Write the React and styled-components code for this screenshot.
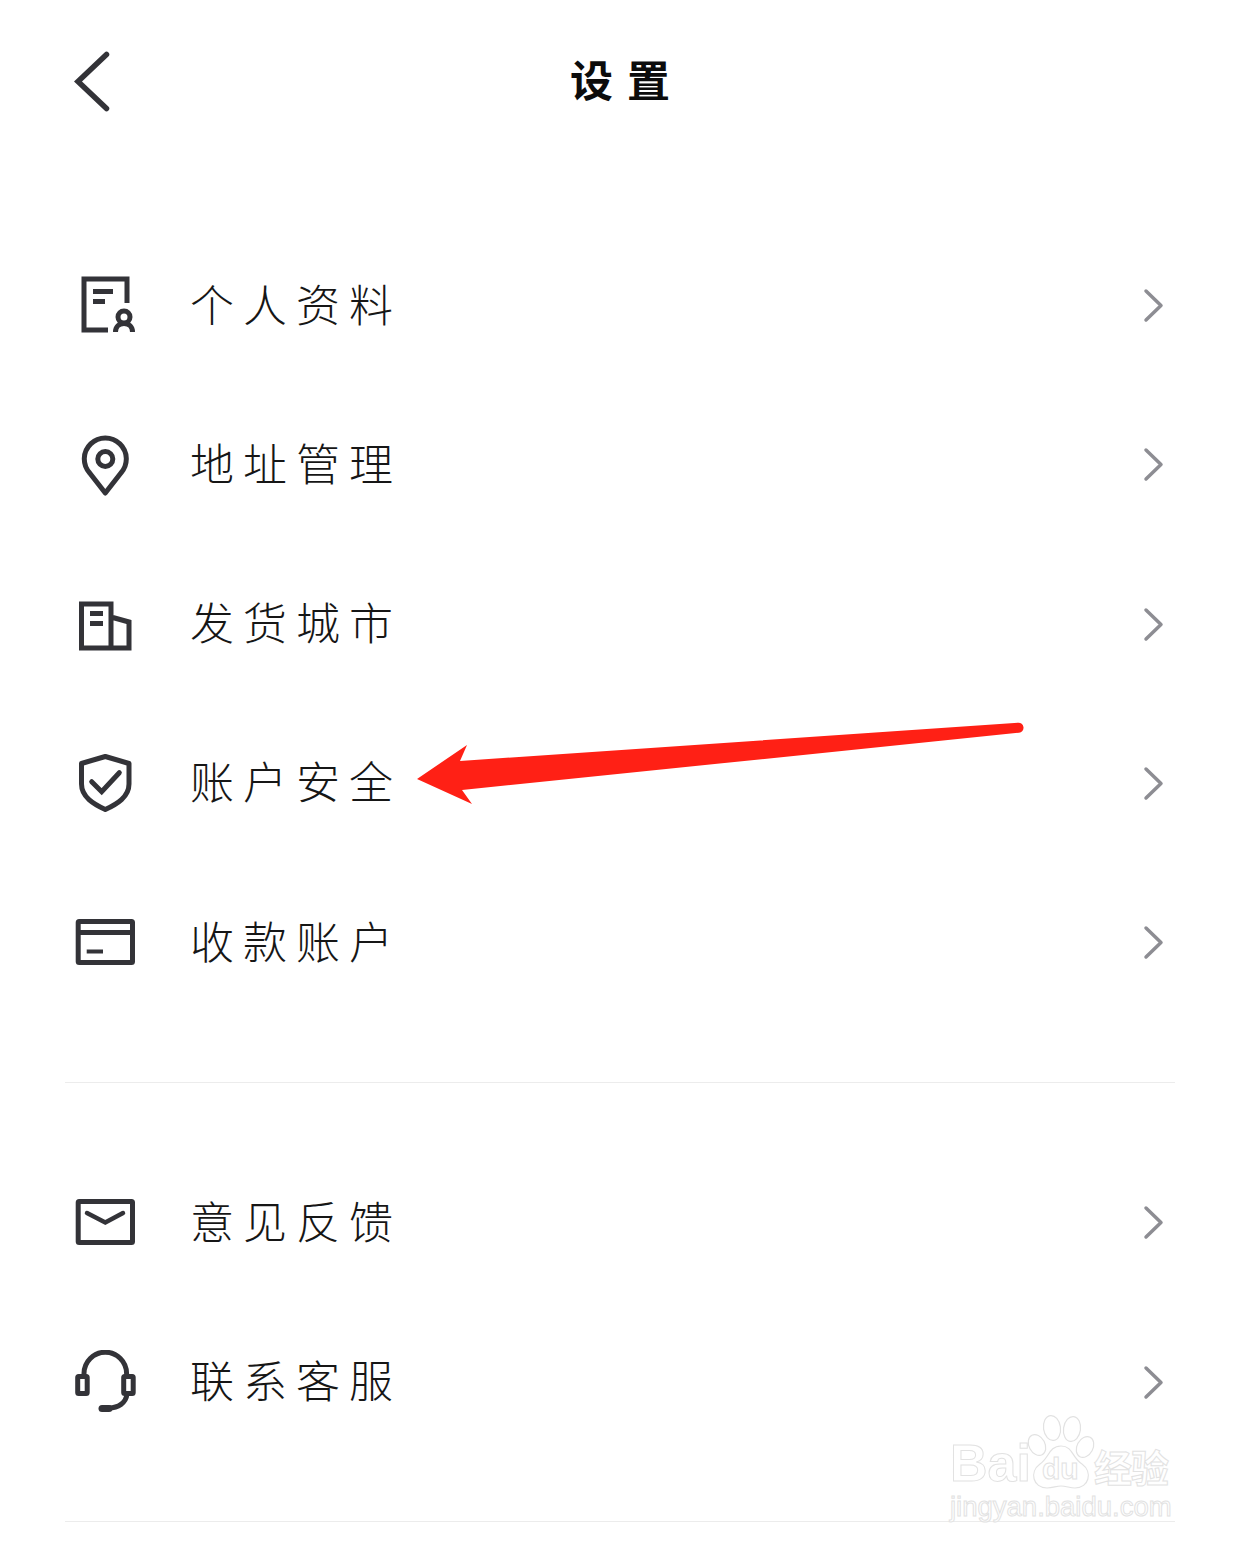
import React from 'react';
import styled, { createGlobalStyle } from 'styled-components';

const GlobalStyle = createGlobalStyle`
  html, body {
    margin: 0;
    padding: 0;
    background: #fff;
  }
  body {
    font-family: "Noto Sans CJK SC", "Liberation Sans", sans-serif;
  }
`;

const Page = styled.div`
  position: relative;
  width: 1240px;
  height: 1548px;
  overflow: hidden;
  background: #fff;
`;

const Header = styled.header`
  display: grid;
  grid-template-columns: 1fr auto 1fr;
  align-items: center;
  height: 160px;
  padding: 0 73px;
`;

const BackButton = styled.button`
  display: flex;
  justify-self: start;
  width: 40px;
  height: 64px;
  padding: 0;
  border: 0;
  background: none;
`;

const Title = styled.h1`
  margin: 0 -14px 4px 0;
  font-size: 43px;
  font-weight: 700;
  line-height: 60px;
  letter-spacing: 14px;
  color: #0c0c0c;
`;

const Menu = styled.ul`
  margin: ${(p) => p.$top}px 0 0;
  padding: 0;
  list-style: none;
`;

const Row = styled.li`
  display: flex;
  align-items: center;
  height: 159.25px;
  padding: 0 75px 0 73px;
`;

const IconBox = styled.svg`
  flex: none;
  width: 64px;
  height: 64px;
  fill: none;
  stroke: #333338;
  stroke-width: 5;
`;

const Label = styled.span`
  flex: 1;
  margin: 0 0 5px 53px;
  font-size: 44px;
  font-weight: 300;
  line-height: 60px;
  letter-spacing: 9px;
  color: #161616;
`;

const Chevron = styled.svg`
  flex: none;
  width: 22px;
  height: 36px;
  fill: none;
  stroke: #8d8d93;
  stroke-width: 3.5;
`;

const Divider = styled.hr`
  height: 1px;
  margin: 60px 65px;
  border: 0;
  background: #ececec;
`;

const Arrow = styled.svg`
  position: absolute;
  left: 410px;
  top: 715px;
  width: 620px;
  height: 95px;
`;

const Watermark = styled.div`
  position: absolute;
  left: 950px;
  top: 1414px;
  width: 226px;
  height: 108px;
  font-family: "Liberation Sans", sans-serif;
  color: #fff;
  -webkit-text-stroke: 1px #e2e2e2;
`;

const Brand = styled.div`
  display: flex;
  align-items: flex-end;
  height: 78px;
`;

const Bai = styled.span`
  font-size: 52px;
  font-weight: 700;
  line-height: 58px;
  letter-spacing: 0;
`;

const Paw = styled.svg`
  flex: none;
  width: 70px;
  height: 78px;
  margin-left: -6px;
  fill: #fff;
  stroke: #e2e2e2;
  stroke-width: 1.2;

  text {
    font-family: "Liberation Sans", sans-serif;
    font-size: 30px;
    font-weight: 700;
    stroke-width: 1;
  }
`;

const Jingyan = styled.span`
  font-family: "Noto Sans CJK SC", sans-serif;
  font-size: 38px;
  font-weight: 700;
  line-height: 52px;
  letter-spacing: -1px;
  margin-left: -1px;
`;

const Domain = styled.div`
  font-size: 27.5px;
  line-height: 30px;
  white-space: nowrap;
`;

const ProfileIcon = () => (
  <IconBox viewBox="0 0 64 64">
    <path d="M54 30V6H11V57H35" />
    <path d="M20 18.5H40M20 28.5H32" />
    <circle cx="51" cy="44" r="6" />
    <path d="M42.5 59c0-5 3.5-8.5 8.5-8.5s8.5 3.5 8.5 8.5" />
  </IconBox>
);

const PinIcon = () => (
  <IconBox viewBox="0 0 64 64">
    <path d="M32.3 61 L16.7 41 A21 21 0 1 1 47.9 41 Z" strokeLinejoin="round" />
    <circle cx="32.3" cy="27" r="7.5" />
  </IconBox>
);

const BuildingIcon = () => (
  <IconBox viewBox="0 0 64 64">
    <path d="M38 56V12H8.5V56H56V30L38 25" />
    <path d="M17 21.5H30M17 31.5H30" />
  </IconBox>
);

const ShieldIcon = () => (
  <IconBox viewBox="0 0 64 64">
    <path
      d="M32.3 5.5 56 12.5V33C56 46 44 53 32.3 58.5 20.6 53 8.5 46 8.5 33V12.5Z"
      strokeLinejoin="round"
    />
    <path d="M18.7 30.7 28.7 40.7 46.3 21.7" strokeLinecap="round" />
  </IconBox>
);

const CardIcon = () => (
  <IconBox viewBox="0 0 64 64">
    <rect x="5.2" y="11.5" width="54.3" height="41" rx="1" />
    <path d="M5 22.5H59.5" />
    <path d="M13.7 41.5H30" strokeWidth="4" />
  </IconBox>
);

const MailIcon = () => (
  <IconBox viewBox="0 0 64 64">
    <rect x="5.2" y="11.5" width="54.3" height="41" rx="1" />
    <path d="M14 23 32.3 32.5 50 23" strokeWidth="4.5" strokeLinecap="round" />
  </IconBox>
);

const HeadsetIcon = () => (
  <IconBox viewBox="0 0 64 64" strokeWidth="4.5">
    <rect x="4.7" y="26.5" width="9.5" height="17" rx="1" />
    <rect x="50.7" y="26.5" width="9.5" height="17" rx="1" />
    <path d="M11 26V23.5A21.3 21.3 0 0 1 53.6 23.5V26" />
    <path d="M54 44C53 53 45 58 36 58" />
    <path d="M29 58.5H36" strokeWidth="7" strokeLinecap="round" />
  </IconBox>
);

const accountItems = [
  { label: '个人资料', Icon: ProfileIcon },
  { label: '地址管理', Icon: PinIcon },
  { label: '发货城市', Icon: BuildingIcon },
  { label: '账户安全', Icon: ShieldIcon },
  { label: '收款账户', Icon: CardIcon },
];

const serviceItems = [
  { label: '意见反馈', Icon: MailIcon },
  { label: '联系客服', Icon: HeadsetIcon },
];

const MenuRows = ({ items }) =>
  items.map(({ label, Icon }) => (
    <Row key={label}>
      <Icon />
      <Label>{label}</Label>
      <Chevron viewBox="0 0 22 36">
        <path d="M3 4 18 18.5 3 33" strokeLinecap="round" strokeLinejoin="round" />
      </Chevron>
    </Row>
  ));

const App = () => {
  return (
    <Page>
      <GlobalStyle />
      <Header>
        <BackButton aria-label="返回">
          <svg width="40" height="64" viewBox="0 0 40 64" fill="none" stroke="#333338" strokeWidth="5.5">
            <path d="M33.5 6.5 5 33.5 33.5 60.5" strokeLinecap="round" strokeLinejoin="miter" />
          </svg>
        </BackButton>
        <Title>设置</Title>
      </Header>

      <Menu $top={65.4}>
        <MenuRows items={accountItems} />
      </Menu>
      <Divider />
      <Menu $top={0}>
        <MenuRows items={serviceItems} />
      </Menu>
      <Divider />

      <Arrow viewBox="410 715 620 95">
        <path
          fill="#ff2015"
          d="M417 779 467 745 460 761 1018 722.7A5 5 0 0 1 1019 732.7L462 790 472 804Z"
        />
      </Arrow>

      <Watermark>
        <Brand>
          <Bai>Bai</Bai>
          <Paw viewBox="0 0 70 78">
            <ellipse cx="27" cy="14" rx="8.5" ry="12.5" transform="rotate(-8 27 14)" />
            <ellipse cx="47" cy="15" rx="8.5" ry="12.5" transform="rotate(8 47 15)" />
            <ellipse cx="12" cy="31" rx="8" ry="11" transform="rotate(-28 12 31)" />
            <ellipse cx="60" cy="33" rx="8" ry="11" transform="rotate(28 60 33)" />
            <path d="M36 32C24 32 24 44 15 50 4 58 8 74 22 74 28 74 31 72 36 72 41 72 45 74 50 74 64 74 68 58 57 50 47 44 48 32 36 32Z" />
            <text x="17" y="65">du</text>
          </Paw>
          <Jingyan>经验</Jingyan>
        </Brand>
        <Domain>jingyan.baidu.com</Domain>
      </Watermark>
    </Page>
  );
};

export default App;
